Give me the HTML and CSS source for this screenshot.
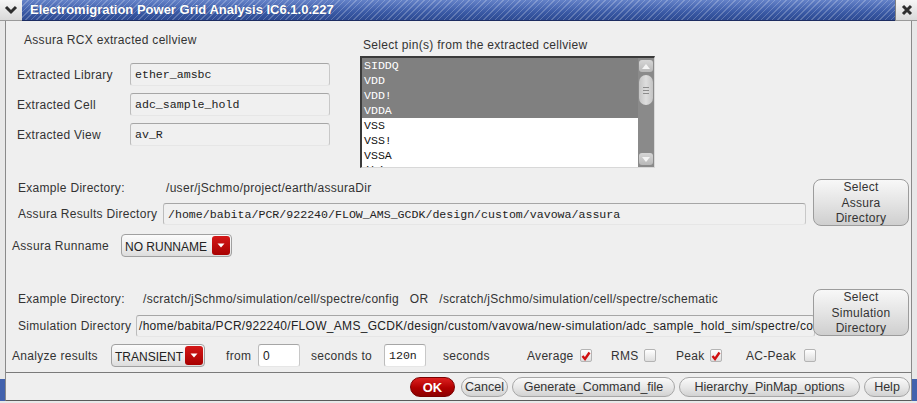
FILE: index.html
```html
<!DOCTYPE html>
<html>
<head>
<meta charset="utf-8">
<title>Electromigration Power Grid Analysis</title>
<link rel="stylesheet" href="styles.css">
</head>
<body>
<div class="window">
  <div class="titlebar">
    <div class="tb-btn tb-menu"><svg width="14" height="10" viewBox="0 0 14 10"><path d="M2 2 L7 7 L12 2" stroke="#2e2e2e" stroke-width="3" fill="none"/></svg></div>
    <div class="tb-title">Electromigration Power Grid Analysis IC6.1.0.227</div>
    <div class="tb-btn tb-close"><svg width="12" height="12" viewBox="0 0 12 12"><path d="M2 2 L10 10 M10 2 L2 10" stroke="#2e2e2e" stroke-width="3" fill="none"/></svg></div>
  </div>
  <div class="frame">
    <div class="top">
      <div class="cv">
        <div class="cv-head">Assura RCX extracted cellview</div>
        <div class="field"><span class="flabel">Extracted Library</span><span class="input cv-input mono">ether_amsbc</span></div>
        <div class="field"><span class="flabel">Extracted Cell</span><span class="input cv-input mono">adc_sample_hold</span></div>
        <div class="field"><span class="flabel">Extracted View</span><span class="input cv-input mono">av_R</span></div>
      </div>
      <div class="pins">
        <div class="pins-head">Select pin(s) from the extracted cellview</div>
        <div class="listbox">
          <div class="items">
            <div class="item sel">SIDDQ</div>
            <div class="item sel">VDD</div>
            <div class="item sel">VDD!</div>
            <div class="item sel">VDDA</div>
            <div class="item">VSS</div>
            <div class="item">VSS!</div>
            <div class="item">VSSA</div>
            <div class="item">ibias100</div>
          </div>
          <div class="scrollbar">
            <div class="sb-arrow"><svg width="10" height="7" viewBox="0 0 10 7"><path d="M1 6 L5 1 L9 6 Z" fill="#f4f4f4"/></svg></div>
            <div class="sb-thumb"><span></span><span></span><span></span></div>
            <div class="sb-space"></div>
            <div class="sb-arrow"><svg width="10" height="7" viewBox="0 0 10 7"><path d="M1 1 L5 6 L9 1 Z" fill="#f4f4f4"/></svg></div>
          </div>
        </div>
      </div>
    </div>

    <div class="dirsec assura">
      <div class="dir-left">
        <div class="ex-row"><span class="ex-label">Example Directory:</span><span class="ex-value">/user/jSchmo/project/earth/assuraDir</span></div>
        <div class="in-row"><span class="in-label">Assura Results Directory</span><span class="input dir-input mono">/home/babita/PCR/922240/FLOW_AMS_GCDK/design/custom/vavowa/assura</span></div>
      </div>
      <div class="sel-btn">Select<br>Assura<br>Directory</div>
    </div>

    <div class="runname">
      <span class="r-label">Assura Runname</span>
      <div class="combo combo-run"><span class="combo-text">NO RUNNAME</span><span class="combo-btn"><svg width="8" height="5" viewBox="0 0 8 5"><path d="M0.5 0.5 L4 4.5 L7.5 0.5 Z" fill="#fff"/></svg></span></div>
    </div>

    <div class="dirsec sim">
      <div class="dir-left">
        <div class="ex-row"><span class="ex-label">Example Directory:</span><span class="ex-value">/scratch/jSchmo/simulation/cell/spectre/config&nbsp;&nbsp;&nbsp;OR&nbsp;&nbsp;&nbsp;/scratch/jSchmo/simulation/cell/spectre/schematic</span></div>
        <div class="in-row"><span class="in-label">Simulation Directory</span><span class="input dir-input">/home/babita/PCR/922240/FLOW_AMS_GCDK/design/custom/vavowa/new-simulation/adc_sample_hold_sim/spectre/config</span></div>
      </div>
      <div class="sel-btn">Select<br>Simulation<br>Directory</div>
    </div>

    <div class="analyze">
      <span class="a-label">Analyze results</span>
      <div class="combo combo-trans"><span class="combo-text">TRANSIENT</span><span class="combo-btn"><svg width="8" height="5" viewBox="0 0 8 5"><path d="M0.5 0.5 L4 4.5 L7.5 0.5 Z" fill="#fff"/></svg></span></div>
      <span class="a-from">from</span>
      <span class="input small">0</span>
      <span class="a-secto">seconds to</span>
      <span class="input small mono">120n</span>
      <span class="a-sec">seconds</span>
      <span class="a-avg">Average</span>
      <span class="cb"><svg width="10" height="10" viewBox="0 0 10 10"><path d="M1.5 5 L4 8 L8.5 1.5" stroke="#d01010" stroke-width="2.4" fill="none"/></svg></span>
      <span class="a-rms">RMS</span>
      <span class="cb"></span>
      <span class="a-peak">Peak</span>
      <span class="cb"><svg width="10" height="10" viewBox="0 0 10 10"><path d="M1.5 5 L4 8 L8.5 1.5" stroke="#d01010" stroke-width="2.4" fill="none"/></svg></span>
      <span class="a-acpeak">AC-Peak</span>
      <span class="cb"></span>
    </div>

    <div class="buttons">
      <span class="btn btn-ok">OK</span>
      <span class="btn btn-cancel">Cancel</span>
      <span class="btn btn-gen">Generate_Command_file</span>
      <span class="btn btn-hier">Hierarchy_PinMap_options</span>
      <span class="btn btn-help">Help</span>
    </div>
  </div>
</div>
</body>
</html>
```

FILE: styles.css
```css
body {
  margin: 0;
  background: #efefef;
  font-family: "Liberation Sans", Arial, sans-serif;
  font-size: 12px;
  letter-spacing: 0.3px;
  color: #333333;
}

.window {
  width: 917px;
  height: 403px;
  position: relative;
  overflow: hidden;
  background: #e8e8e8;
  display: flex;
  flex-direction: column;
}

.window::before {
  content: "";
  position: absolute;
  left: 0;
  bottom: 2px;
  width: 22px;
  height: 22px;
  border-left: 5px solid #4262ad;
  border-bottom: 3px solid #4262ad;
  box-sizing: border-box;
}

.window::after {
  content: "";
  position: absolute;
  right: 0;
  bottom: 2px;
  width: 22px;
  height: 22px;
  border-right: 5px solid #4262ad;
  border-bottom: 3px solid #4262ad;
  box-sizing: border-box;
}

.titlebar {
  height: 21px;
  display: flex;
  flex-shrink: 0;
}

.tb-btn {
  width: 22px;
  height: 21px;
  box-sizing: border-box;
  background: linear-gradient(#f6f6f6, #d9d9d9);
  border-bottom: 1px solid #9a9a9a;
  display: flex;
  align-items: center;
  justify-content: center;
}

.tb-close {
  border-left: 1px solid #7f7f7f;
}

.tb-title {
  flex: 1;
  box-sizing: border-box;
  height: 21px;
  color: #ffffff;
  font-weight: bold;
  font-size: 13px;
  letter-spacing: 0;
  line-height: 20px;
  padding-left: 8px;
  background:
    repeating-linear-gradient(135deg, rgba(255,255,255,0.22) 0 1px, transparent 1px 4px),
    linear-gradient(#6482c8, #3a5aa6 60%, #2d4a92);
  border-bottom: 1px solid #1c2c60;
  text-shadow: 0 0 1px rgba(0,0,0,0.3);
}

.frame {
  flex: 1;
  margin: 0 5px 2px 5px;
  border-left: 1px solid #8a8a8a;
  border-right: 1px solid #8a8a8a;
  border-bottom: 1px solid #5a5a5a;
  background: #efefef;
  display: flex;
  flex-direction: column;
  position: relative;
  z-index: 1;
}

.mono {
  font-family: "Liberation Mono", "Courier New", monospace;
  font-size: 11.6px;
  letter-spacing: 0;
}

.input {
  box-sizing: border-box;
  border: 1px solid;
  border-color: #a6a6a6 #c8c8c8 #e6e6e6 #bcbcbc;
  border-radius: 3px;
  background: #f0f0f0;
  color: #222;
  white-space: nowrap;
  overflow: hidden;
  display: flex;
  align-items: center;
}

/* top section */
.top {
  height: 158px;
  display: flex;
}

.cv {
  width: 354px;
  padding-top: 12px;
  box-sizing: border-box;
}

.cv-head {
  height: 14px;
  line-height: 14px;
  padding-left: 18px;
  margin-bottom: 16px;
}

.field {
  display: flex;
  align-items: center;
  height: 23px;
  margin-bottom: 7px;
}

.flabel {
  width: 124px;
  padding-left: 11px;
  box-sizing: border-box;
}

.cv-input {
  width: 200px;
  height: 23px;
  padding-left: 4px;
}

.pins {
  padding-top: 17px;
}

.pins-head {
  height: 14px;
  line-height: 14px;
  padding-left: 3px;
  margin-bottom: 4px;
}

.listbox {
  width: 295px;
  height: 112px;
  box-sizing: border-box;
  border: 1px solid;
  border-color: #3a3a3a #d8d8d8 #d8d8d8 #3a3a3a;
  border-top-width: 2px;
  border-left-width: 2px;
  background: #ffffff;
  display: flex;
  overflow: hidden;
}

.items {
  flex: 1;
  overflow: hidden;
  font-family: "Liberation Mono", "Courier New", monospace;
  font-size: 11.6px;
  letter-spacing: 0;
}

.item {
  height: 15px;
  line-height: 15px;
  padding-left: 2px;
  color: #111;
}

.item.sel {
  background: #808080;
  color: #ffffff;
}

.scrollbar {
  width: 16px;
  background: #8a8a8a;
  display: flex;
  flex-direction: column;
  align-items: center;
  padding: 2px 0;
  box-sizing: border-box;
}

.sb-arrow {
  width: 14px;
  height: 12px;
  border-radius: 3px;
  background: linear-gradient(#d6d6d6, #b8b8b8);
  display: flex;
  align-items: center;
  justify-content: center;
}

.sb-thumb {
  width: 14px;
  height: 30px;
  margin-top: 3px;
  border-radius: 7px;
  background: linear-gradient(90deg, #c4c4c4, #dedede, #c4c4c4);
  display: flex;
  flex-direction: column;
  align-items: center;
  justify-content: center;
  gap: 2px;
}

.sb-thumb span {
  width: 6px;
  height: 1px;
  background: #8c8c8c;
}

.sb-space {
  flex: 1;
}

/* directory sections */
.dirsec {
  display: flex;
}

.dir-left {
  flex: 1;
  display: flex;
  flex-direction: column;
  padding-left: 12px;
  min-width: 0;
}

.ex-row {
  height: 18px;
  line-height: 18px;
  display: flex;
  white-space: nowrap;
}

.in-row {
  display: flex;
  align-items: center;
  height: 22px;
}

.dir-input {
  flex: 1;
  height: 22px;
  min-width: 0;
}

.assura .ex-label,
.assura .in-label {
  width: 145px;
  flex-shrink: 0;
}

.assura .ex-value {
  padding-left: 3px;
}

.assura .in-row {
  margin-top: 6px;
}

.assura .dir-left {
  margin-right: 7px;
}

.assura .dir-input {
  padding-left: 4px;
}

.sim {
  margin-top: 32px;
}

.sim .dir-left {
  padding-top: 1px;
}

.sim .ex-label,
.sim .in-label {
  width: 118px;
  flex-shrink: 0;
}

.sim .ex-value {
  padding-left: 7px;
}

.sim .in-row {
  margin-top: 7px;
}

.sim .dir-input {
  padding-left: 2px;
  margin-right: -2px;
}

.sel-btn {
  width: 96px;
  height: 47px;
  flex-shrink: 0;
  box-sizing: border-box;
  margin-right: 2px;
  border: 1px solid #9c9c9c;
  border-radius: 8px;
  background: linear-gradient(#f8f8f8, #e4e4e4 50%, #cfcfcf);
  text-align: center;
  line-height: 15.5px;
  color: #333;
  position: relative;
  z-index: 2;
}

/* runname */
.runname {
  margin-top: 8px;
  height: 23px;
  display: flex;
  align-items: center;
  padding-left: 6px;
}

.r-label {
  width: 109px;
}

.combo {
  box-sizing: border-box;
  height: 23px;
  border: 1px solid #a0a0a0;
  border-radius: 4px;
  background: linear-gradient(#fbfbfb, #ececec 60%, #dcdcdc);
  display: flex;
  align-items: center;
  justify-content: space-between;
  padding: 0 1px 0 3px;
  font-size: 12px;
  letter-spacing: 0;
  color: #222;
}

.combo-run {
  width: 111px;
}

.combo-trans {
  width: 94px;
}

.combo-text {
  padding-top: 2px;
}

.combo-btn {
  width: 18px;
  height: 19px;
  border-radius: 3px;
  background: linear-gradient(#d41818, #a80000);
  display: flex;
  align-items: center;
  justify-content: center;
}

/* analyze */
.analyze {
  margin-top: 7px;
  height: 23px;
  display: flex;
  align-items: center;
  padding-left: 6px;
  white-space: nowrap;
}

.a-label { width: 99px; }
.a-from { width: 32px; margin-left: 21px; }
.a-secto { width: 73px; margin-left: 11px; }
.a-sec { width: 84px; margin-left: 17px; }
.a-avg { width: 53px; }
.a-rms { width: 33px; margin-left: 19px; }
.a-peak { width: 34px; margin-left: 20px; }
.a-acpeak { width: 58px; margin-left: 24px; }

.input.small {
  width: 42px;
  height: 23px;
  background: #ffffff;
  padding-left: 4px;
}

.cb {
  box-sizing: border-box;
  width: 12px;
  height: 13px;
  border: 1px solid #b4b4b4;
  border-radius: 2px;
  background: linear-gradient(#ffffff, #dedede);
  display: flex;
  align-items: center;
  justify-content: center;
}

/* bottom buttons */
.buttons {
  margin-top: 5px;
  border-top: 1px solid #7a7a7a;
  flex: 1;
  display: flex;
  justify-content: flex-end;
  align-items: flex-start;
  padding-top: 4px;
  padding-right: 1px;
  gap: 4px;
}

.btn {
  box-sizing: border-box;
  height: 20px;
  border: 1px solid #a6a6a6;
  border-radius: 10px;
  background: linear-gradient(#fafafa, #e8e8e8 50%, #d2d2d2);
  display: flex;
  align-items: center;
  justify-content: center;
  color: #333;
  font-size: 12.5px;
  letter-spacing: 0;
}

.btn-ok {
  width: 45px;
  margin-right: 2px;
  background: linear-gradient(#dd2020, #b00000 55%, #8c0000);
  border-color: #7a0000;
  color: #ffffff;
  font-weight: bold;
  font-size: 13px;
}

.btn-cancel { width: 47px; }
.btn-gen { width: 163px; }
.btn-hier { width: 181px; }
.btn-help { width: 46px; }
```
